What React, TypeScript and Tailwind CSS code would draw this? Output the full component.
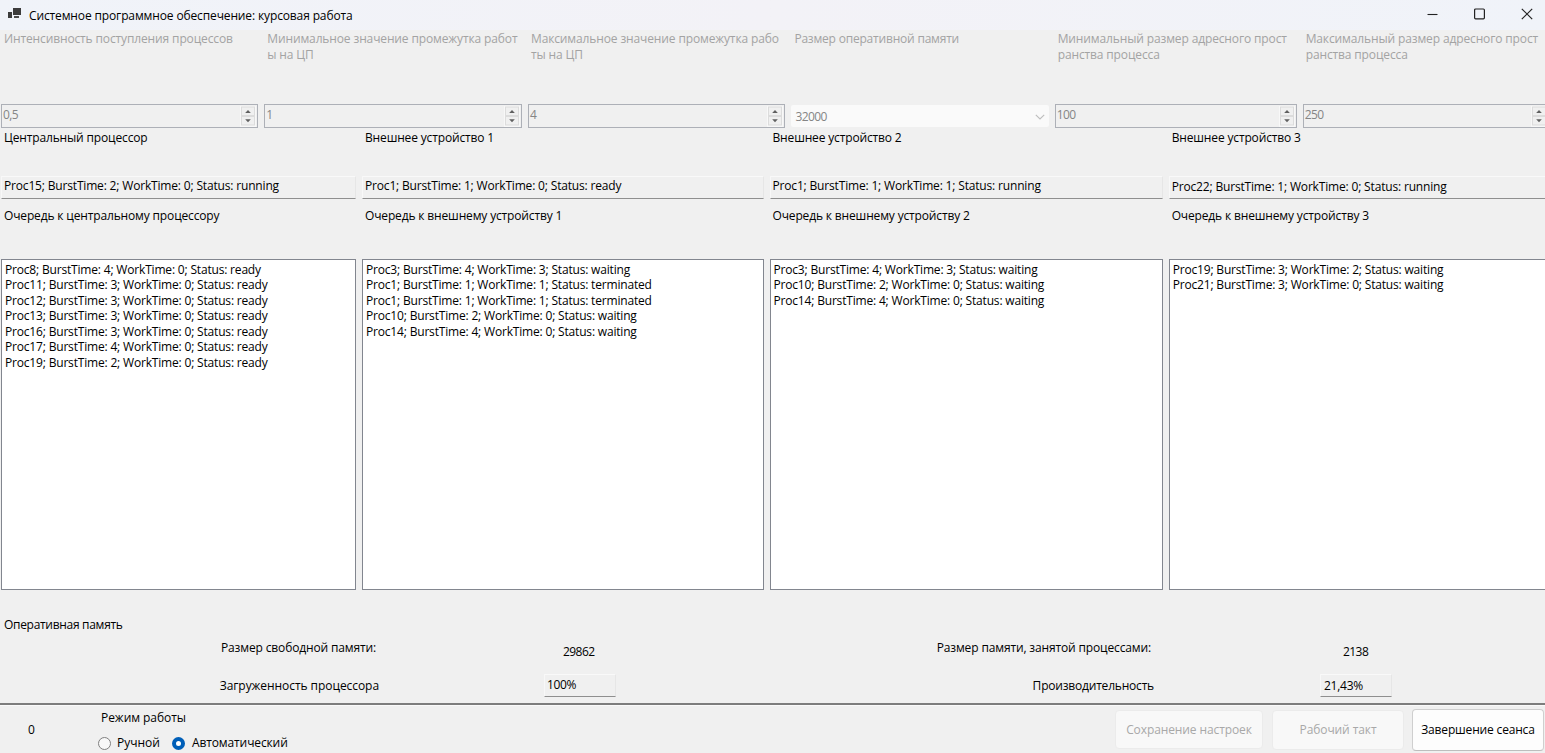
import type { ReactNode } from 'react';

const params = [
  { lines: ['Интенсивность поступления процессов'], value: '0,5' },
  { lines: ['Минимальное значение промежутка работ', 'ы на ЦП'], value: '1' },
  { lines: ['Максимальное значение промежутка рабо', 'ты на ЦП'], value: '4' },
  { lines: ['Размер оперативной памяти'], value: '32000', select: true },
  { lines: ['Минимальный размер адресного прост', 'ранства процесса'], value: '100' },
  { lines: ['Максимальный размер адресного прост', 'ранства процесса'], value: '250' },
];

const devices = [
  {
    name: 'Центральный процессор',
    current: 'Proc15; BurstTime: 2; WorkTime: 0; Status: running',
    queueName: 'Очередь к центральному процессору',
    queue: [
      'Proc8; BurstTime: 4; WorkTime: 0; Status: ready',
      'Proc11; BurstTime: 3; WorkTime: 0; Status: ready',
      'Proc12; BurstTime: 3; WorkTime: 0; Status: ready',
      'Proc13; BurstTime: 3; WorkTime: 0; Status: ready',
      'Proc16; BurstTime: 3; WorkTime: 0; Status: ready',
      'Proc17; BurstTime: 4; WorkTime: 0; Status: ready',
      'Proc19; BurstTime: 2; WorkTime: 0; Status: ready',
    ],
  },
  {
    name: 'Внешнее устройство 1',
    current: 'Proc1; BurstTime: 1; WorkTime: 0; Status: ready',
    queueName: 'Очередь к внешнему устройству 1',
    queue: [
      'Proc3; BurstTime: 4; WorkTime: 3; Status: waiting',
      'Proc1; BurstTime: 1; WorkTime: 1; Status: terminated',
      'Proc1; BurstTime: 1; WorkTime: 1; Status: terminated',
      'Proc10; BurstTime: 2; WorkTime: 0; Status: waiting',
      'Proc14; BurstTime: 4; WorkTime: 0; Status: waiting',
    ],
  },
  {
    name: 'Внешнее устройство 2',
    current: 'Proc1; BurstTime: 1; WorkTime: 1; Status: running',
    queueName: 'Очередь к внешнему устройству 2',
    queue: [
      'Proc3; BurstTime: 4; WorkTime: 3; Status: waiting',
      'Proc10; BurstTime: 2; WorkTime: 0; Status: waiting',
      'Proc14; BurstTime: 4; WorkTime: 0; Status: waiting',
    ],
  },
  {
    name: 'Внешнее устройство 3',
    current: 'Proc22; BurstTime: 1; WorkTime: 0; Status: running',
    queueName: 'Очередь к внешнему устройству 3',
    queue: [
      'Proc19; BurstTime: 3; WorkTime: 2; Status: waiting',
      'Proc21; BurstTime: 3; WorkTime: 0; Status: waiting',
    ],
  },
];

function TitleBar() {
  return (
    <header className="flex h-[30px] shrink-0 items-center bg-linear-to-r from-[#f0f3f9] via-[#f3f2f7] to-[#f0f3f9] pl-2">
      <svg width="14" height="13" viewBox="0 0 14 13" className="mt-[-3px]" shapeRendering="crispEdges">
        <rect x="5" y="1" width="8" height="7" fill="#3c3c3c" />
        <rect x="0" y="5" width="4" height="6" fill="#3c3c3c" />
        <rect x="6" y="9" width="5" height="2" fill="#4c4c4c" />
      </svg>
      <h1 className="ml-[7px] grow whitespace-nowrap pt-px tracking-[-0.13px]">Системное программное обеспечение: курсовая работа</h1>
      <div className="flex items-center gap-[36px] pr-3">
        <svg width="11" height="12" viewBox="0 0 11 12" className="mt-[-2px]">
          <path d="M0.5 6.5H10.5" stroke="#222" strokeWidth="1.1" />
        </svg>
        <svg width="11" height="12" viewBox="0 0 11 12" className="mt-[-2px]">
          <rect x="0.6" y="1" width="9.8" height="9.8" rx="1" fill="none" stroke="#222" strokeWidth="1.2" />
        </svg>
        <svg width="12" height="12" viewBox="0 0 12 12" className="mt-[-2px]">
          <path d="M0.8 0.8L11.2 11.2M11.2 0.8L0.8 11.2" stroke="#222" strokeWidth="1.2" />
        </svg>
      </div>
    </header>
  );
}

function Spinner() {
  return (
    <svg width="16" height="21" viewBox="0 0 16 21" className="mt-px shrink-0">
      <rect width="16" height="21" fill="#f8f8f8" />
      <rect x="1.5" y="1" width="13" height="8.5" fill="#f0f0f0" stroke="#dcdcdc" />
      <rect x="1.5" y="10.5" width="13" height="8.5" fill="#f0f0f0" stroke="#dcdcdc" />
      <path d="M5.2 7L8 4L10.8 7Z" fill="#606060" />
      <path d="M5.2 13.2L8 16.2L10.8 13.2Z" fill="#606060" />
    </svg>
  );
}

function Param({ lines, value, select }: { lines: string[]; value: string; select?: boolean }) {
  return (
    <div className="flex min-w-0 flex-col">
      <div className={`h-[74px] pl-[3px] pt-[1px] leading-[15.6px] text-[#a3a3a3] ${select ? 'tracking-[-0.2px]' : 'tracking-[-0.13px]'}`}>
        {lines.map((line) => (
          <div key={line} className="whitespace-nowrap">{line}</div>
        ))}
      </div>
      {select ? (
        <div className="mt-px flex h-[22px] items-center justify-between rounded-[2px] bg-[#fafafa] pl-1 pr-1 tracking-[-0.55px] text-[#858585]">
          <span className="mt-px">{value}</span>
          <svg width="10" height="6" viewBox="0 0 10 6" className="mt-px">
            <path d="M0.8 0.8L5 5L9.2 0.8" fill="none" stroke="#bdbdbd" strokeWidth="1.1" />
          </svg>
        </div>
      ) : (
        <div className="flex h-[24px] justify-between border border-[#adb0b7] pl-px pr-px leading-[19px] tracking-[-0.55px] text-[#858585]">
          <span>{value}</span>
          <Spinner />
        </div>
      )}
    </div>
  );
}

function Field({ children, className }: { children: ReactNode; className: string }) {
  return (
    <div className={`border border-[#e6e6e6] border-b-[#8f8f8f] border-l-[#f8f8f8] border-t-[#f9f9f9] whitespace-nowrap ${className}`}>
      {children}
    </div>
  );
}

function Memory() {
  return (
    <section className="flex h-[113px] shrink-0 flex-col tracking-[-0.11px]">
      <h2 className="mt-[25px] h-5 pl-1 leading-5 tracking-[-0.3px]">Оперативная память</h2>
      <div className="grid h-[38px] grid-cols-[379px_395px_380px_1fr] leading-4">
        <span className="pt-[5px] pr-[3px] text-right tracking-[-0.14px]">Размер свободной памяти:</span>
        <span className="pt-[9px] pl-[184px] tracking-[-0.55px]">29862</span>
        <span className="pt-[5px] pr-[3px] text-right tracking-[-0.14px]">Размер памяти, занятой процессами:</span>
        <span className="pt-[9px] pl-[189px] tracking-[-0.55px]">2138</span>
      </div>
      <div className="grid h-[30px] grid-cols-[379px_395px_380px_1fr] leading-4">
        <span className="pt-[5px] text-right tracking-[-0.06px]">Загруженность процессора</span>
        <Field className="ml-[165px] mt-px h-[23px] w-[72px] pl-[2px] pt-[2px] tracking-[-0.35px]">100%</Field>
        <span className="pt-[5px] text-right tracking-[-0.2px]">Производительность</span>
        <Field className="ml-[166px] mt-px h-[23px] w-[72px] pl-[3px] pt-[3px] tracking-[-0.25px]">21,43%</Field>
      </div>
    </section>
  );
}

function Footer() {
  return (
    <footer className="flex h-[50px] shrink-0 border-t-2 border-[#7d7d7d] shadow-[inset_0_1px_0_#fafafa] tracking-[-0.1px]">
      <div className="w-[97px] pl-[28px] pt-[17px] leading-4">0</div>
      <div className="grow leading-4">
        <div className="pl-[4px] pt-[5px] tracking-[-0.05px]">Режим работы</div>
        <div className="mt-[9px] flex items-center pl-px">
          <span className="size-[13px] rounded-full border border-[#808080] bg-[#f8f8f8]" />
          <span className="ml-[6px] w-[55px] tracking-[0px]">Ручной</span>
          <span className="size-[13px] rounded-full border-4 border-[#005fb8] bg-white" />
          <span className="ml-[7px] tracking-[-0.12px]">Автоматический</span>
        </div>
      </div>
      <div className="flex items-start pt-[4px]">
        <button className="mt-px h-[39px] w-[148px] rounded-[4px] border border-[#ebebeb] bg-[#f8f8f8] text-[#a8a8a8]">Сохранение настроек</button>
        <button className="ml-[9px] mt-px h-[40px] w-[132px] rounded-[4px] border border-[#ebebeb] bg-[#f8f8f8] text-[#a8a8a8]">Рабочий такт</button>
        <button className="ml-[8px] mr-px h-[42px] w-[132px] rounded-[4px] border border-[#cfcfcf] border-b-[#bdbdbd] bg-[#fdfdfd] tracking-[-0.17px]">Завершение сеанса</button>
      </div>
    </footer>
  );
}

export default function App() {
  return (
    <div className="flex h-[753px] w-[1545px] flex-col overflow-hidden bg-[#f0f0f0] font-['Open_Sans','Noto_Sans',sans-serif] text-[12px] text-black">
      <TitleBar />
      <section className="grid shrink-0 grid-cols-[257.3px_257.7px_257.4px_257.3px_242px_246px] gap-x-[6px] pl-px">
        {params.map((p) => (
          <Param key={p.lines[0]} {...p} />
        ))}
      </section>
      <section className="grid h-[462px] shrink-0 grid-cols-[355px_401.5px_393.2px_382px] gap-x-[6px] pl-px tracking-[-0.15px]">
        {devices.map((d, i) => (
          <div key={d.name} className="flex min-w-0 flex-col">
            <h2 className="h-[48px] pl-[3px] leading-[20px]">{d.name}</h2>
            <Field className={i === 3 ? 'h-[23px] pl-[2px] leading-[19px] tracking-[-0.17px]' : 'h-[23px] pl-[2px] leading-[17px] tracking-[-0.17px]'}>{d.current}</Field>
            <h2 className="h-[60px] pl-[3px] pt-[8px] leading-[18px]">{d.queueName}</h2>
            <ul className="h-[331px] whitespace-nowrap border border-[#82868f] bg-white pl-[3px] pt-[1.5px] leading-[15.6px] tracking-[-0.18px]">
              {d.queue.map((q, n) => (
                <li key={n}>{q}</li>
              ))}
            </ul>
          </div>
        ))}
      </section>
      <Memory />
      <Footer />
    </div>
  );
}
